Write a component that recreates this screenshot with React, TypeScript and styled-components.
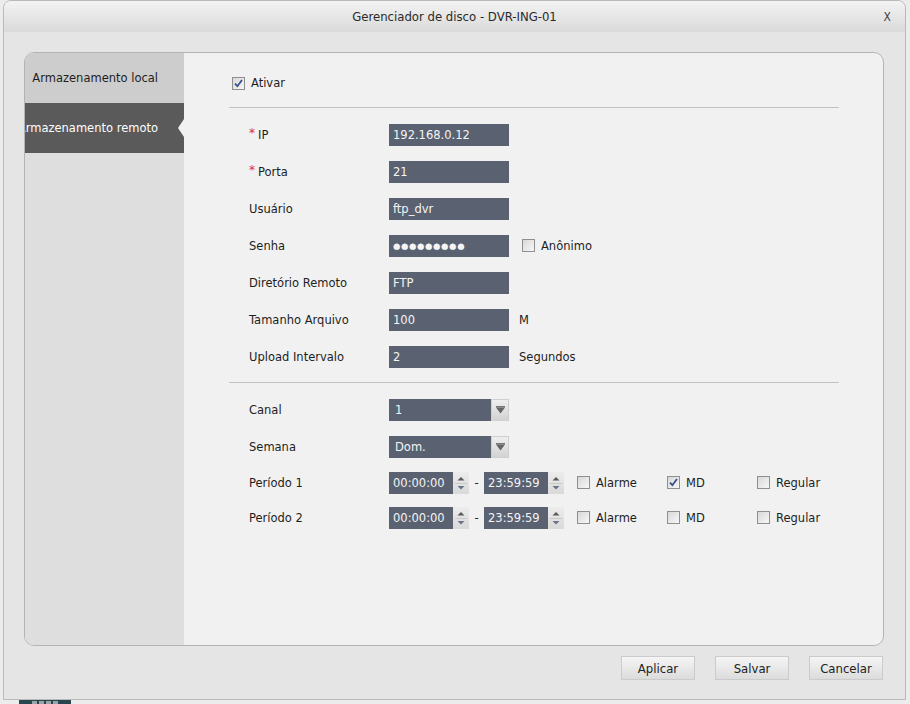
import React from 'react';
import styled, { createGlobalStyle } from 'styled-components';

const GlobalStyle = createGlobalStyle`
  html, body {
    margin: 0;
    padding: 0;
    background: #ececec;
    width: 910px;
    height: 704px;
    overflow: hidden;
  }
  * {
    box-sizing: border-box;
  }
`

const UI_FONT = `"DejaVu Sans", Tahoma, Verdana, sans-serif`;
const NARROW_FONT = `"Liberation Sans Narrow", "DejaVu Sans Condensed", "Liberation Sans", sans-serif`;

const Page = styled.div`
  width: 910px;
  height: 704px;
  display: flex;
  flex-direction: column;
  font-family: ${UI_FONT};
`

const Window = styled.div`
  height: 700px;
  margin: 0 4px 0 3px;
  border: 1px solid #b9b9b9;
  border-radius: 8px 8px 0 0;
  background: #e5e5e5;
  display: flex;
  flex-direction: column;
  overflow: hidden;
`

const TitleBar = styled.div`
  height: 31px;
  flex-shrink: 0;
  display: grid;
  grid-template-columns: 1fr auto 1fr;
  align-items: center;
  background: linear-gradient(#f3f3f3, #dadada);
  font-family: ${NARROW_FONT};
  font-size: 13px;
  color: #2a2a2a;
`

const CloseButton = styled.span`
  justify-self: end;
  padding-right: 14px;
  font-size: 12px;
  color: #444;
  cursor: pointer;
`

const Body = styled.div`
  flex: 1;
  padding: 20px 21px 0 20px;
  display: flex;
  flex-direction: column;
`

const Panel = styled.div`
  height: 594px;
  display: flex;
  border: 1px solid #b4b4b4;
  border-radius: 10px;
  overflow: hidden;
  background: #f1f1f1;
`

const Sidebar = styled.div`
  width: 159px;
  flex-shrink: 0;
  background: #dedede;
  display: flex;
  flex-direction: column;
`

const Tab = styled.div<{ $active?: boolean }>`
  position: relative;
  height: 50px;
  display: flex;
  align-items: center;
  justify-content: flex-end;
  padding-right: 26px;
  white-space: nowrap;
  overflow: hidden;
  font-size: 11.5px;
  background: ${p => (p.$active ? '#5a5a5a' : '#cdcdcd')};
  color: ${p => (p.$active ? '#ffffff' : '#1e1e1e')};

  ${p => p.$active && `
    &::after {
      content: '';
      position: absolute;
      right: 0;
      top: 16px;
      border-top: 9px solid transparent;
      border-bottom: 9px solid transparent;
      border-right: 6px solid #f1f1f1;
    }
  `}
`

const Content = styled.div`
  flex: 1;
  padding: 19px 0 0 45px;
  display: flex;
  flex-direction: column;
`

const EnableRow = styled.label`
  height: 22px;
  padding-left: 3px;
  display: flex;
  align-items: center;
  gap: 6px;
  font-size: 11.5px;
  color: #1e1e1e;
`

const Divider = styled.div<{ $top: number }>`
  width: 610px;
  height: 1px;
  background: #c2c2c2;
  margin-top: ${p => p.$top}px;
`

const Section = styled.div<{ $top: number }>`
  padding: ${p => p.$top}px 0 0 20px;
  display: flex;
  flex-direction: column;
`

const Row = styled.div<{ $h?: number }>`
  height: ${p => p.$h ?? 37}px;
  display: flex;
  align-items: center;
  font-size: 11.5px;
  color: #1e1e1e;
`

const Label = styled.div`
  width: 140px;
  flex-shrink: 0;
  display: flex;
  align-items: center;
`

const Required = styled.span`
  color: #e0302a;
  font-size: 12px;
  width: 9px;
  margin-top: -3px;
`

const Field = styled.input<{ $w?: number; $secret?: boolean }>`
  width: ${p => p.$w ?? 120}px;
  height: 22px;
  border: none;
  outline: none;
  padding: 0 0 0 4px;
  background: #5a6272;
  color: #f4f4f4;
  font-family: ${UI_FONT};
  font-size: ${p => (p.$secret ? '8.5px' : '11.5px')};
  letter-spacing: ${p => (p.$secret ? '0.6px' : 'normal')};
`

const Unit = styled.span`
  margin-left: 10px;
`

const SelectBox = styled.div`
  width: 120px;
  height: 22px;
  display: flex;
`

const SelectValue = styled.div`
  flex: 1;
  background: #5a6272;
  color: #f4f4f4;
  padding-left: 6px;
  display: flex;
  align-items: center;
`

const SelectArrow = styled.div`
  width: 18px;
  display: flex;
  align-items: center;
  justify-content: center;
  background: linear-gradient(#eeeeee, #d3d3d3);
  border: 1px solid #cfcfcf;
`

const TimeGroup = styled.div`
  display: flex;
  align-items: center;
`

const SpinBox = styled.div`
  width: 16px;
  height: 22px;
  background: linear-gradient(#ececec, #d9d9d9);
  display: flex;
`

const Dash = styled.span`
  width: 15px;
  text-align: center;
`

const Checks = styled.div`
  display: flex;
  margin-left: 13px;
`

const CheckItem = styled.label<{ $w?: number }>`
  width: ${p => p.$w ?? 90}px;
  display: flex;
  align-items: center;
  gap: 6px;
`

const Box = styled.span`
  width: 13px;
  height: 13px;
  flex-shrink: 0;
  border: 1px solid #8e8f8f;
  background: linear-gradient(135deg, #d8d8d8, #f7f7f7);
  display: flex;
  align-items: center;
  justify-content: center;
`

const Footer = styled.div`
  display: flex;
  justify-content: flex-end;
  gap: 20px;
  padding: 10px 1px 0 0;
`

const Button = styled.button`
  width: 74px;
  height: 24px;
  border: 1px solid #cbcbcb;
  background: linear-gradient(#f5f5f5, #dcdcdc);
  font-family: ${NARROW_FONT};
  font-size: 13px;
  color: #222;
  padding: 0;
  cursor: pointer;
`

const Taskbar = styled.div`
  height: 4px;
  padding-left: 19px;
  display: flex;
`

const TaskIcon = styled.div`
  width: 52px;
  height: 4px;
  background: #27464d;
  display: flex;
  justify-content: center;
  gap: 2px;
  padding-top: 1px;

  span {
    width: 5px;
    height: 3px;
    background: #9aa4a8;
  }
`

const Checkbox: React.FC<{ checked?: boolean }> = ({ checked }) => (
  <Box>
    {checked && (
      <svg width="9" height="9" viewBox="0 0 9 9">
        <path d="M1 4.6 L3.4 7.2 L8 1" fill="none" stroke="#3b4f8c" strokeWidth="1.8" />
      </svg>
    )}
  </Box>
);

const Spinner: React.FC = () => (
  <SpinBox>
    <svg width="16" height="22" viewBox="0 0 16 22">
      <path d="M4.5 8.5 L8 5 L11.5 8.5 Z" fill="#5a5a5a" />
      <line x1="2" y1="11.5" x2="14" y2="11.5" stroke="#c8c8c8" />
      <path d="M4.5 14 L11.5 14 L8 17.5 Z" fill="#6a7388" />
    </svg>
  </SpinBox>
);

const Select: React.FC<{ value: string }> = ({ value }) => (
  <SelectBox>
    <SelectValue>{value}</SelectValue>
    <SelectArrow>
      <svg width="9" height="8" viewBox="0 0 9 8">
        <rect x="0" y="0" width="9" height="1.5" fill="#777" />
        <path d="M0 1.5 L9 1.5 L4.5 7.5 Z" fill="#666" />
      </svg>
    </SelectArrow>
  </SelectBox>
);

const TimeInput: React.FC<{ value: string }> = ({ value }) => (
  <TimeGroup>
    <Field $w={64} value={value} readOnly />
    <Spinner />
  </TimeGroup>
);

interface PeriodProps {
  name: string;
  md?: boolean;
}

const PeriodRow: React.FC<PeriodProps> = ({ name, md }) => (
  <Row $h={35}>
    <Label>{name}</Label>
    <TimeInput value="00:00:00" />
    <Dash>-</Dash>
    <TimeInput value="23:59:59" />
    <Checks>
      <CheckItem><Checkbox />Alarme</CheckItem>
      <CheckItem><Checkbox checked={md} />MD</CheckItem>
      <CheckItem><Checkbox />Regular</CheckItem>
    </Checks>
  </Row>
);

const App: React.FC = () => {
  return (
    <Page>
      <GlobalStyle />
      <Window>
        <TitleBar>
          <span />
          <span>Gerenciador de disco - DVR-ING-01</span>
          <CloseButton>X</CloseButton>
        </TitleBar>
        <Body>
          <Panel>
            <Sidebar>
              <Tab>Armazenamento local</Tab>
              <Tab $active>Armazenamento remoto</Tab>
            </Sidebar>
            <Content>
              <EnableRow>
                <Checkbox checked />
                Ativar
              </EnableRow>
              <Divider $top={13} />
              <Section $top={8}>
                <Row>
                  <Label><Required>*</Required>IP</Label>
                  <Field value="192.168.0.12" readOnly />
                </Row>
                <Row>
                  <Label><Required>*</Required>Porta</Label>
                  <Field value="21" readOnly />
                </Row>
                <Row>
                  <Label>Usuário</Label>
                  <Field value="ftp_dvr" readOnly />
                </Row>
                <Row>
                  <Label>Senha</Label>
                  <Field $secret value={'\u25CF'.repeat(9)} readOnly />
                  <Checks>
                    <CheckItem><Checkbox />Anônimo</CheckItem>
                  </Checks>
                </Row>
                <Row>
                  <Label>Diretório Remoto</Label>
                  <Field value="FTP" readOnly />
                </Row>
                <Row>
                  <Label>Tamanho Arquivo</Label>
                  <Field value="100" readOnly />
                  <Unit>M</Unit>
                </Row>
                <Row>
                  <Label>Upload Intervalo</Label>
                  <Field value="2" readOnly />
                  <Unit>Segundos</Unit>
                </Row>
              </Section>
              <Divider $top={7} />
              <Section $top={8}>
                <Row>
                  <Label>Canal</Label>
                  <Select value="1" />
                </Row>
                <Row>
                  <Label>Semana</Label>
                  <Select value="Dom." />
                </Row>
                <PeriodRow name="Período 1" md />
                <PeriodRow name="Período 2" />
              </Section>
            </Content>
          </Panel>
          <Footer>
            <Button>Aplicar</Button>
            <Button>Salvar</Button>
            <Button>Cancelar</Button>
          </Footer>
        </Body>
      </Window>
      <Taskbar>
        <TaskIcon>
          <span /><span /><span /><span />
        </TaskIcon>
      </Taskbar>
    </Page>
  );
}

export default App;
